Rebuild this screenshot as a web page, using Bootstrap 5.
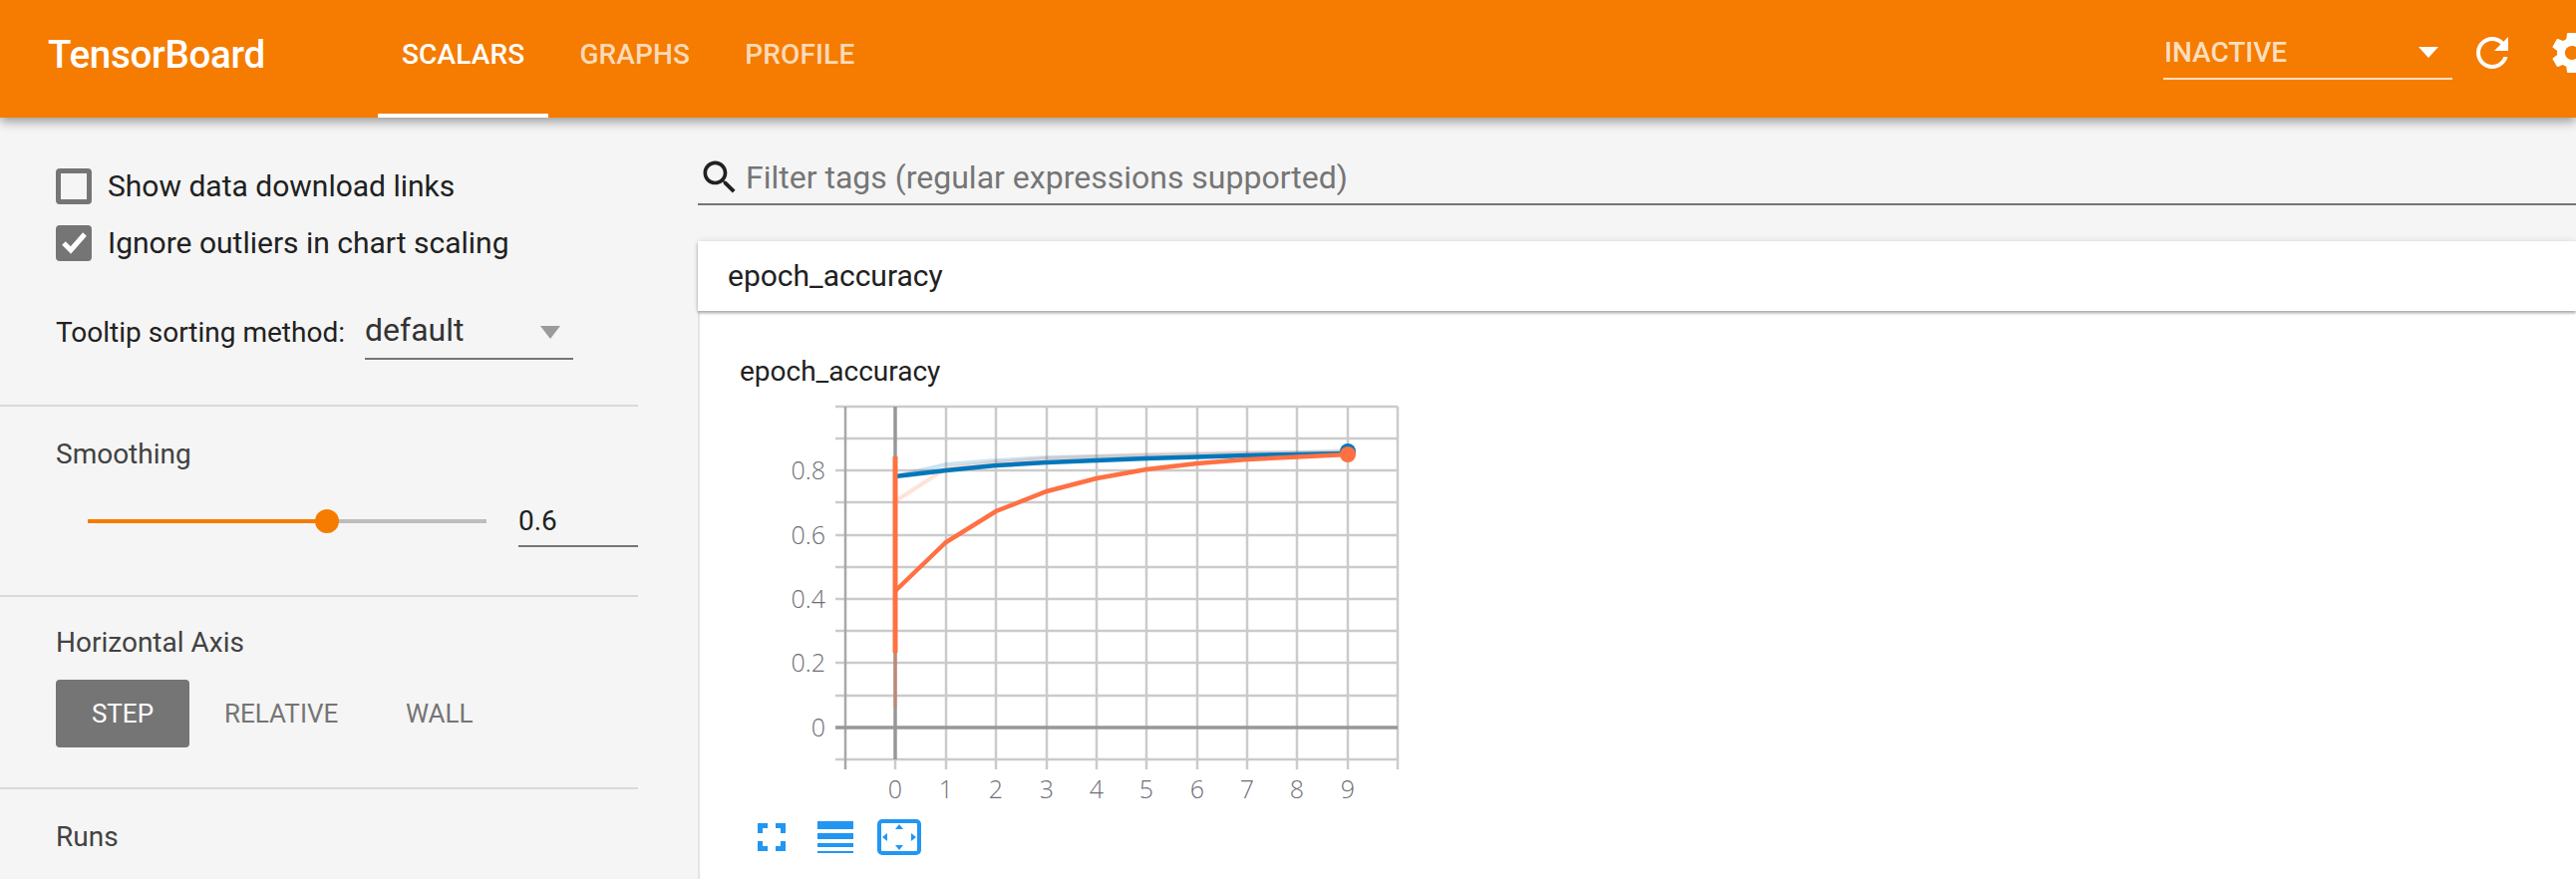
<!DOCTYPE html>
<html lang="en">
<head>
<meta charset="utf-8">
<title>TensorBoard</title>
<link href="https://cdn.jsdelivr.net/npm/bootstrap@5.3.0/dist/css/bootstrap.min.css" rel="stylesheet">
<style>
html,body{height:882px;overflow:hidden;background:#f5f5f5;font-family:Roboto,"Liberation Sans",sans-serif;color:#212121}
.tb-head{height:118px;background:#f57c00;color:#fff;box-shadow:0 4px 10px rgba(0,0,0,.38);position:relative;z-index:5;width:2584px;overflow:hidden}
.tb-brand{font-size:38.6px;font-weight:500;margin-left:48px;width:331px;letter-spacing:-.3px;line-height:110px}
.tb-tab{display:block;font-size:28px;font-weight:500;letter-spacing:.15px;line-height:109px;height:118px;padding:0 24px;color:rgba(255,255,255,.72);text-decoration:none;border-bottom:4px solid transparent;width:auto}
.tb-tab.on{color:#fff;border-bottom-color:#fff}
.tb-tabs{gap:7px}
.tb-inactive{width:290px;height:80px;margin-left:auto;border-bottom:2px solid rgba(255,255,255,.75);font-size:28px;font-weight:500;color:rgba(255,255,255,.75);line-height:105px;padding-left:1px;padding-right:14px}
.tb-caret{width:0;height:0;border-left:10px solid transparent;border-right:10px solid transparent;border-top:11px solid #fff;margin-top:47px}
.tb-tool{flex:none}
.tb-refresh{margin:29px 0 0 16px}
.tb-gear{margin:29px -20px 0 32px}
.tb-side{width:640px;flex:none}
.tb-sect{border-bottom:2px solid #d9d9d9;padding-left:56px}
.tb-s1{height:290px;padding-top:51px}
.tb-s2{height:191px;padding-top:30px}
.tb-s3{height:193px;padding-top:28px}
.tb-s4{padding-top:30px}
.tb-check{height:36px;margin-bottom:21px;font-size:30px;line-height:36px;gap:16px}
.tb-box{width:36px;height:36px;border:5px solid #757575;border-radius:4px;flex:none}
.tb-box.on{background:#757575}
.tb-box svg{display:block;margin:-5px}
.tb-sort{margin-top:37px;font-size:28px;height:60px;position:relative}
.tb-sort-lab{width:310px;line-height:70px;color:#212121}
.tb-select{width:209px;height:62px;border-bottom:2px solid #757575;font-size:32px;line-height:64px;padding-right:13px;color:#333}
.tb-drop{width:0;height:0;border-left:10px solid transparent;border-right:10px solid transparent;border-top:13px solid #9b9b9b;margin-top:28px}
.tb-label{font-size:28px;line-height:36px;color:#424242}
.tb-slide{margin-top:29px;height:60px;margin-left:32px}
.tb-track{width:400px;height:4px;background:#bdbdbd;position:relative;margin-top:18px}
.tb-fill{height:4px;background:#f57c00}
.tb-thumb{position:absolute;top:-10px;width:24px;height:24px;border-radius:50%;background:#f57c00;margin-left:-12px}
.tb-num{width:120px;margin-left:32px;height:46px;padding-top:2px;border-bottom:2px solid #757575;font-size:28px;line-height:36px;color:#212121}
.tb-axis{margin-top:19px;gap:0}
.tb-btn{font-size:26px;line-height:68px;height:68px;color:#757575;border-radius:4px;padding:0;text-align:center}
.tb-btn.on{background:#757575;color:#fff;width:134px}
.tb-b2{margin-left:35px;width:114px}
.tb-b3{margin-left:68px;width:67px}
.tb-main{flex:1;margin-left:60px;min-width:0}
.tb-search{height:88px;border-bottom:2px solid #757575;gap:4px;padding-top:40px}
.tb-search svg{flex:none;margin-top:-2px}
.tb-ph{font-size:32px;line-height:38px;color:#757575;margin-top:1px}
.tb-cat{height:70px;margin-top:36px;background:#fff;font-size:30px;line-height:70px;padding-left:30px;color:#212121;box-shadow:0 2px 3px rgba(0,0,0,.35),0 -1px 6px rgba(0,0,0,.08);position:relative;z-index:2}
.tb-body{background:#fff;height:570px;border-left:2px solid #e4e4e4;padding:42px 0 0 40px}
.tb-ctitle{font-size:28px;line-height:37px;color:#212121}
.tb-plot{display:block;margin:0 0 0 -42px}
.tb-plot text{font-family:"Open Sans",Roboto,sans-serif;font-weight:300;font-size:25px;fill:#6f6f78}
.tb-ctrl{display:block;margin:0}
</style>
</head>
<body>
<header class="tb-head d-flex">
  <div class="tb-brand">TensorBoard</div>
  <nav class="tb-tabs d-flex">
    <a class="tb-tab on" href="#">SCALARS</a>
    <a class="tb-tab" href="#">GRAPHS</a>
    <a class="tb-tab" href="#">PROFILE</a>
  </nav>
  <div class="tb-inactive d-flex justify-content-between"><span>INACTIVE</span><span class="tb-caret"></span></div>
  <svg class="tb-tool tb-refresh" width="48" height="48" viewBox="0 0 24 24" fill="#fff"><path d="M17.65 6.35C16.2 4.9 14.21 4 12 4c-4.42 0-7.99 3.58-7.99 8s3.57 8 7.99 8c3.73 0 6.84-2.55 7.73-6h-2.08c-.82 2.33-3.04 4-5.65 4-3.31 0-6-2.69-6-6s2.69-6 6-6c1.66 0 3.14.69 4.22 1.78L13 11h7V4l-2.35 2.35z"/></svg>
  <svg class="tb-tool tb-gear" width="48" height="48" viewBox="0 0 24 24" fill="#fff"><path d="M19.43 12.98c.04-.32.07-.64.07-.98s-.03-.66-.07-.98l2.11-1.65c.19-.15.24-.42.12-.64l-2-3.46c-.12-.22-.39-.3-.61-.22l-2.49 1c-.52-.4-1.08-.73-1.69-.98l-.38-2.65C14.46 2.18 14.25 2 14 2h-4c-.25 0-.46.18-.49.42l-.38 2.65c-.61.25-1.17.59-1.69.98l-2.49-1c-.23-.09-.49 0-.61.22l-2 3.46c-.13.22-.07.49.12.64l2.11 1.65c-.04.32-.07.65-.07.98s.03.66.07.98l-2.11 1.65c-.19.15-.24.42-.12.64l2 3.46c.12.22.39.3.61.22l2.49-1c.52.4 1.08.73 1.69.98l.38 2.65c.03.24.24.42.49.42h4c.25 0 .46-.18.49-.42l.38-2.65c.61-.25 1.17-.59 1.69-.98l2.49 1c.23.09.49 0 .61-.22l2-3.46c.12-.22.07-.49-.12-.64l-2.11-1.65zM12 15.5c-1.93 0-3.5-1.57-3.5-3.5s1.57-3.5 3.5-3.5 3.5 1.57 3.5 3.5-1.57 3.5-3.5 3.5z"/></svg>
</header>
<div class="d-flex">
  <aside class="tb-side">
    <section class="tb-sect tb-s1">
      <div class="tb-check d-flex"><span class="tb-box"></span><span>Show data download links</span></div>
      <div class="tb-check d-flex"><span class="tb-box on"><svg width="36" height="36" viewBox="0 0 36 36"><path d="M8 18l7 7L29 9" fill="none" stroke="#fff" stroke-width="5"/></svg></span><span>Ignore outliers in chart scaling</span></div>
      <div class="tb-sort d-flex">
        <div class="tb-sort-lab">Tooltip sorting method:</div>
        <div class="tb-select d-flex justify-content-between"><span>default</span><span class="tb-drop"></span></div>
      </div>
    </section>
    <section class="tb-sect tb-s2">
      <div class="tb-label">Smoothing</div>
      <div class="tb-slide d-flex">
        <div class="tb-track"><div class="tb-fill" style="width:60%"></div><div class="tb-thumb" style="left:60%"></div></div>
        <div class="tb-num">0.6</div>
      </div>
    </section>
    <section class="tb-sect tb-s3">
      <div class="tb-label">Horizontal Axis</div>
      <div class="tb-axis d-flex">
        <div class="tb-btn on">STEP</div>
        <div class="tb-btn tb-b2">RELATIVE</div>
        <div class="tb-btn tb-b3">WALL</div>
      </div>
    </section>
    <section class="tb-s4 ps-5 ms-2">
      <div class="tb-label">Runs</div>
    </section>
  </aside>
  <main class="tb-main">
    <div class="tb-search d-flex">
      <svg width="44" height="44" viewBox="0 0 24 24" fill="#212121"><path d="M15.5 14h-.79l-.28-.27C15.41 12.59 16 11.11 16 9.5 16 5.91 13.09 3 9.5 3S3 5.91 3 9.5 5.91 16 9.5 16c1.61 0 3.09-.59 4.23-1.57l.27.28v.79l5 4.99L20.49 19l-4.99-5zm-6 0C7.01 14 5 11.99 5 9.5S7.01 5 9.5 5 14 7.01 14 9.5 11.99 14 9.5 14z"/></svg>
      <div class="tb-ph">Filter tags (regular expressions supported)</div>
    </div>
    <div class="tb-cat">epoch_accuracy</div>
    <div class="tb-body">
      <div class="tb-ctitle">epoch_accuracy</div>
      <svg class="tb-plot" width="720" height="425" viewBox="700 391 720 425">
        <g stroke="#cbcbcb" stroke-width="2.5" fill="none">
          <path d="M838 408H1402M838 440H1402M838 472H1402M838 504H1402M838 537H1402M838 569H1402M838 601H1402M838 633H1402M838 665H1402M838 698H1402M838 762H1402"/>
          <path d="M949 408V772M999 408V772M1050 408V772M1100 408V772M1150 408V772M1201 408V772M1251 408V772M1301 408V772M1352 408V772M1402 408V772"/>
        </g>
        <path d="M848 408V772" stroke="#a8a8a8" stroke-width="2.5"/>
        <path d="M898 408V762" stroke="#979797" stroke-width="3.5"/>
        <path d="M898 762V772" stroke="#cbcbcb" stroke-width="2.5"/>
        <path d="M838 730H1402" stroke="#979797" stroke-width="3.5"/>
        <g text-anchor="end">
          <text x="828" y="481">0.8</text>
          <text x="828" y="546">0.6</text>
          <text x="828" y="610">0.4</text>
          <text x="828" y="674">0.2</text>
          <text x="828" y="739">0</text>
        </g>
        <g text-anchor="middle">
          <text x="898" y="801">0</text><text x="949" y="801">1</text><text x="999" y="801">2</text><text x="1050" y="801">3</text><text x="1100" y="801">4</text><text x="1150" y="801">5</text><text x="1201" y="801">6</text><text x="1251" y="801">7</text><text x="1301" y="801">8</text><text x="1352" y="801">9</text>
        </g>
        <path d="M898 710V655" stroke="#ff7043" stroke-opacity=".3" stroke-width="4" fill="none"/>
        <path d="M898 503L949 470L999 464L1050 460L1100 458L1150 456L1201 455L1251 454L1301 454L1352 453" stroke="#ff7043" stroke-opacity=".2" stroke-width="4" fill="none"/>
        <path d="M898 478L949 466L999 462L1050 459L1100 458L1150 457L1201 456L1251 455L1301 454L1352 453" stroke="#0077bb" stroke-opacity=".2" stroke-width="4" fill="none"/>
        <circle cx="1352" cy="453" r="8" fill="#0077bb"/>
        <path d="M898 478L949 472L999 467L1050 464L1100 462L1150 460L1201 458.500L1251 457L1301 456L1352 455" stroke="#0077bb" stroke-width="4.500" fill="none"/>
        <path d="M898 458V655" stroke="#ff7043" stroke-width="5" fill="none"/>
        <path d="M898 593L949 544L999 513L1050 493L1100 480L1150 471L1201 465L1251 461L1301 458.500L1352 456" stroke="#ff7043" stroke-width="4.500" fill="none"/>
        <circle cx="1352" cy="456" r="8" fill="#ff7043"/>
      </svg>
      <svg class="tb-ctrl" width="200" height="50" viewBox="742 816 200 50" fill="#2196f3">
        <path d="M760 826h10v5h-5v5h-5zM778 826h10v10h-5v-5h-5zM760 844h5v5h5v5h-10zM783 844h5v10h-10v-5h5z"/>
        <path d="M820 824h36v8h-36zM820 836h36v6h-36zM820 846h36v4h-36zM820 854h36v2h-36z"/>
        <rect x="882" y="824" width="40" height="32" rx="3" fill="none" stroke="#2196f3" stroke-width="4"/>
        <path d="M902 827l4 5h-8zM902 853l4-5h-8zM885 840l5-4v8zM919 840l-5-4v8z"/>
      </svg>
    </div>
  </main>
</div>
<script src="https://cdn.jsdelivr.net/npm/bootstrap@5.3.0/dist/js/bootstrap.bundle.min.js"></script>
</body>
</html>
